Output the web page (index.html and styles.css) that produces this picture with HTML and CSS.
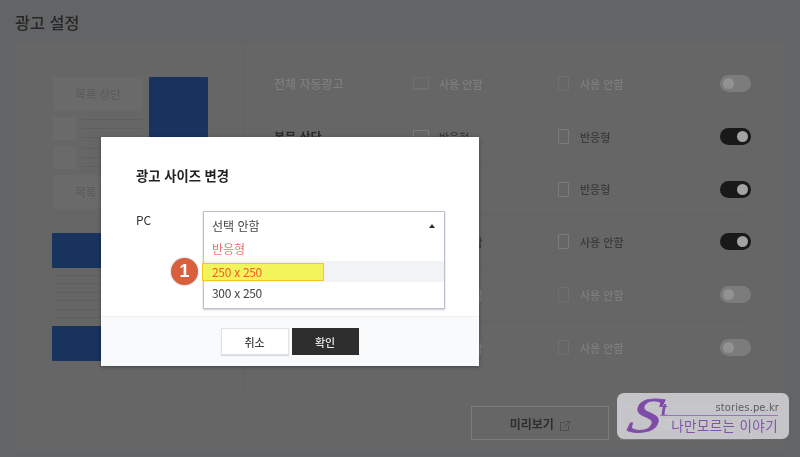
FILE: index.html
```html
<!DOCTYPE html>
<html lang="ko">
<head>
<meta charset="utf-8">
<title>광고 설정</title>
<link rel="stylesheet" href="styles.css">
</head>
<body>
<div class="page">
  <h1 class="page-title">광고 설정</h1>
  <section class="panel">
    <div class="panel-body">
      <div class="preview">
        <div class="preview-top">
          <div class="preview-list">
            <div class="slot">목록 상단</div>
            <div class="entry"><div class="thumb"></div><div class="lines"><i></i><i></i><i></i></div></div>
            <div class="entry"><div class="thumb"></div><div class="lines"><i></i><i></i><i></i></div></div>
            <div class="slot">목록 하단</div>
          </div>
          <div class="side-ad"></div>
        </div>
        <div class="band"></div>
        <div class="para"><i></i><i></i><i></i><i></i><i></i><i></i></div>
        <div class="band"></div>
      </div>
      <div class="rows">
        <div class="row off"><span class="name">전체 자동광고</span><span class="cell"><span class="ico-pc"></span>사용 안함</span><span class="cell"><span class="ico-phone"></span>사용 안함</span><span class="toggle"></span></div>
        <div class="row"><span class="name">본문 상단</span><span class="cell"><span class="ico-pc"></span>반응형</span><span class="cell"><span class="ico-phone"></span>반응형</span><span class="toggle"></span></div>
        <div class="row"><span class="name">본문 중단</span><span class="cell"><span class="ico-pc"></span>반응형</span><span class="cell"><span class="ico-phone"></span>반응형</span><span class="toggle"></span></div>
        <div class="row"><span class="name">본문 하단</span><span class="cell"><span class="ico-pc"></span>사용 안함</span><span class="cell"><span class="ico-phone"></span>사용 안함</span><span class="toggle"></span></div>
        <div class="row off"><span class="name">목록 상단</span><span class="cell"><span class="ico-pc"></span>사용 안함</span><span class="cell"><span class="ico-phone"></span>사용 안함</span><span class="toggle"></span></div>
        <div class="row off last"><span class="name">목록 하단</span><span class="cell"><span class="ico-pc"></span>사용 안함</span><span class="cell"><span class="ico-phone"></span>사용 안함</span><span class="toggle"></span></div>
      </div>
    </div>
    <div class="panel-foot">
      <button class="ghost-btn preview-btn">미리보기
        <svg class="ext" viewBox="0 0 10 10" width="10" height="10" fill="none" stroke="#4d4d4d" stroke-width="1"><path d="M5 1.500H.5v8h8V5"/><path d="M4 6 9.500.5M6 .5h3.500V4"/></svg>
      </button>
      <button class="ghost-btn save-btn">변경사항 저장</button>
    </div>
  </section>

  <div class="modal">
    <div class="modal-main">
      <h2 class="modal-title">광고 사이즈 변경</h2>
      <div class="field">
        <span class="field-label">PC</span>
        <div class="select">
          <div class="select-head">선택 안함<span class="caret"></span></div>
          <div class="opt opt-red">반응형</div>
          <div class="opt opt-hover"><span class="mark"></span><span class="badge">1</span><span class="opt-text">250 x 250</span></div>
          <div class="opt">300 x 250</div>
        </div>
      </div>
    </div>
    <div class="modal-foot">
      <button class="btn-cancel">취소</button>
      <button class="btn-ok">확인</button>
    </div>
  </div>

  <div class="watermark">
    <span class="wm-logo">S</span><span class="wm-t">t</span>
    <span class="wm-site">stories.pe.kr</span>
    <span class="wm-rule"></span>
    <span class="wm-name">나만모르는 이야기</span>
  </div>
</div>
</body>
</html>
```
FILE: styles.css
```css
* { box-sizing: border-box; }
html, body { margin: 0; padding: 0; }
body { background: #636466; }
.page {
  position: relative;
  width: 800px;
  height: 457px;
  overflow: hidden;
  background: #636466;
  padding: 0 15px 6px;
  font-family: "Noto Sans CJK KR", "Noto Sans", sans-serif;
  filter: blur(0.35px);
}
.page-title {
  margin: 0;
  height: 42px;
  padding-top: 8px;
  font-size: 16.300px;
  line-height: 28px;
  font-weight: 500;
  color: #262626;
}
.panel {
  height: 409px;
  background: #666666;
  border: 1px solid #646567;
  display: flex;
  flex-direction: column;
}
.panel-body { display: flex; height: 350px; }
.preview {
  width: 228px;
  flex: none;
  padding: 34px 35px 0 36px;
  border-right: 1px solid #636363;
}
.preview-top { display: flex; gap: 6px; margin-left: 1px; }
.preview-list { width: 90px; flex: none; display: flex; flex-direction: column; gap: 6px; }
.slot {
  height: 34px;
  background: #6a6a6a;
  color: #5a5a5a;
  font-size: 11.500px;
  text-align: center;
  line-height: 34px;
}
.entry { display: flex; height: 23px; gap: 5px; }
.thumb { width: 23px; background: #6a6a6a; }
.lines { flex: 1; display: flex; flex-direction: column; justify-content: space-between; padding: 2px 0; }
.lines i, .para i { display: block; height: 1px; background: #5f5f5f; }
.side-ad { width: 59px; height: 131px; flex: none; background: #19335f; border-radius: 1px; }
.band { height: 35px; background: #19335f; border-radius: 1px; }
.preview-top + .band { margin-top: 24px; }
.para { height: 43px; margin: 7px 0 8px; display: flex; flex-direction: column; justify-content: space-between; }
.rows { flex: 1; padding: 15px 33px 0 30px; }
.row {
  display: flex;
  align-items: center;
  height: 52.700px;
  border-bottom: 1px solid #636363;
  font-size: 11px;
  color: #3a3a3a;
}
.row.last { border-bottom: 0; }
.name { width: 139px; font-size: 12px; font-weight: 700; color: #2a2a2a; }
.cell { width: 145px; display: flex; align-items: center; font-weight: 500; }
.ico-pc {
  width: 16px; height: 13px; margin-right: 10px;
  border: 1px solid #7b7b7b;
  border-bottom-width: 2px;
}
.ico-phone {
  width: 11px; height: 15px; margin-right: 11px;
  border: 1px solid #7b7b7b;
  border-radius: 1px;
}
.toggle {
  position: relative;
  width: 31px; height: 17px; margin-left: auto;
  border-radius: 9px;
  background: #191919;
}
.toggle::after {
  content: "";
  position: absolute;
  top: 3px; right: 3px;
  width: 11px; height: 11px;
  border-radius: 50%;
  background: #a3a3a3;
}
.row.off .name, .row.off .cell { color: #7e7e7e; }
.row.off .name { font-weight: 500; }
.row.off .ico-pc, .row.off .ico-phone { border-color: #6f6f6f; }
.row.off .toggle { background: #7c7c7c; }
.row.off .toggle::after { left: 3px; right: auto; background: #929292; }
.panel-foot { display: flex; gap: 11px; padding: 13px 0 0 455px; }
.ghost-btn {
  height: 34px;
  border: 1px solid #7b7b7b;
  background: #666666;
  font: 700 12px "Noto Sans CJK KR", sans-serif;
  color: #2e2e2e;
}
.preview-btn { width: 138px; }
.ext { margin-left: 3px; vertical-align: -2px; }
.save-btn { width: 132px; font-weight: 500; color: #828282; }
.modal {
  position: absolute;
  left: 101px; top: 137px;
  width: 378px; height: 229px;
  background: #fff;
  display: flex;
  flex-direction: column;
  box-shadow: 0 1px 4px rgba(0,0,0,.35);
}
.modal-main { flex: 1; padding: 30px 34px 0 35px; }
.modal-title {
  margin: 0 0 26px;
  font-size: 13.300px;
  line-height: 18px;
  font-weight: 700;
  color: #222;
}
.field { display: flex; }
.field-label { width: 67px; font-size: 12px; line-height: 18px; color: #333; }
.select {
  width: 242px; height: 98px;
  border: 1px solid #b9c0cb;
  box-shadow: 0 1px 2px rgba(0,0,0,.2);
  font-size: 12px;
  color: #444;
  background: #fff;
}
.select-head { position: relative; height: 26px; padding: 5px 8px 0; line-height: 18px; }
.caret {
  position: absolute;
  right: 9px; top: 12px;
  border: 3px solid transparent;
  border-top: 0;
  border-bottom: 4px solid #333;
}
.opt { position: relative; height: 22px; padding: 0 8px; line-height: 22px; letter-spacing: -.3px; }
.opt-red { color: #f66b6b; letter-spacing: 0; }
.opt-hover { height: 21px; background: #f2f3f5; color: #f0602a; margin-top: 1px; }
.opt-text { position: relative; }
.mark {
  position: absolute;
  left: -2px; top: 2px;
  width: 122px; height: 18px;
  background: #f3f35c;
  border: 1px solid #f0c81e;
}
.badge {
  position: absolute;
  left: -33px; top: -3px;
  width: 27px; height: 27px;
  border-radius: 50%;
  background: #d9603f;
  box-shadow: 0 0 2px rgba(0,0,0,.35);
  color: #fff;
  font: 700 18px/27px "Liberation Sans", sans-serif;
  letter-spacing: 0;
  text-align: center;
}
.modal-foot {
  height: 50px;
  background: #f9fafc;
  border-top: 1px solid #eeeff2;
  display: flex;
  justify-content: center;
  gap: 3px;
  padding: 11px 1px 0 0;
}
.btn-cancel, .btn-ok {
  width: 67px; height: 27px;
  font: 500 11px "Noto Sans CJK KR", sans-serif;
  padding: 0;
}
.btn-cancel { width: 68px; background: #fff; border: 1px solid #e2e3e5; color: #444; box-shadow: 0 1px 1px rgba(0,0,0,.12); }
.btn-ok { background: #2e2e2e; border: 1px solid #2e2e2e; color: #e8e8e8; }
.watermark {
  position: absolute;
  left: 617px; top: 393px;
  width: 172px; height: 46px;
  background: rgba(228,228,232,.76);
  border-radius: 7px;
  color: #8353ac;
}
.wm-logo {
  position: absolute;
  left: 13px; top: -3px;
  font: italic 400 50px/50px "Liberation Serif", serif;
  color: #7f4ba8;
  -webkit-text-stroke: .8px #7f4ba8;
  transform: skewX(-14deg) scaleX(1.300);
  transform-origin: left center;
}
.wm-t {
  position: absolute;
  left: 44px; top: 4px;
  font: italic 700 21px/24px "Liberation Serif", serif;
  color: #7f4ba8;
}
.wm-site {
  position: absolute;
  right: 10px; top: 8px;
  font: 10px/14px "DejaVu Sans", sans-serif;
  color: #5c5c5c;
  letter-spacing: .1px;
}
.wm-rule {
  position: absolute;
  left: 43px; right: 11px; top: 22px;
  height: 1px;
  background: #9b72bd;
}
.wm-name {
  position: absolute;
  right: 11px; top: 23px;
  font-size: 13.500px;
  line-height: 19px;
  letter-spacing: .4px;
  color: #8353ac;
}
```
